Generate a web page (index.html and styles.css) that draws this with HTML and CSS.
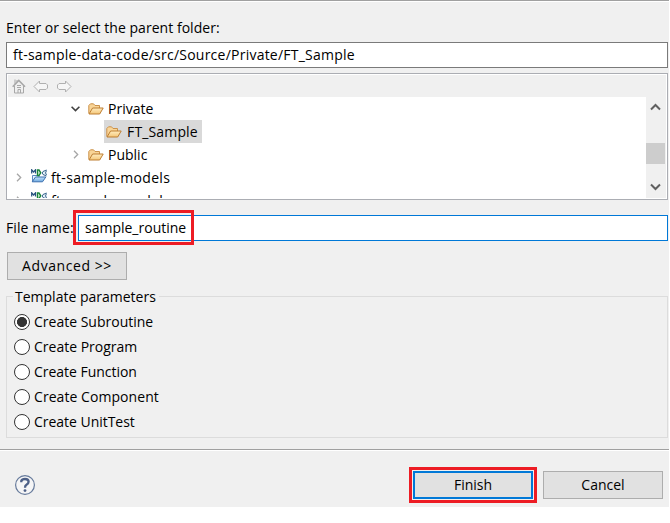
FILE: index.html
```html
<!DOCTYPE html>
<html lang="en">
<head>
<meta charset="utf-8">
<title>New File</title>
<link rel="stylesheet" href="styles.css">
</head>
<body>
<svg class="defs" width="0" height="0" aria-hidden="true">
  <defs>
    <linearGradient id="fold" x1="0" y1="0" x2="0" y2="1"><stop offset="0" stop-color="#ffedc0"/><stop offset="1" stop-color="#f4c678"/></linearGradient>
    <linearGradient id="blue" x1="0" y1="0" x2="0" y2="1"><stop offset="0" stop-color="#c4e4fb"/><stop offset="1" stop-color="#6fa9e0"/></linearGradient>
    <symbol id="folder" viewBox="0 0 16 12"><path d="M.8 10.5V2.5L2.5 .8H5.5L7 2.5H11.5V5" fill="#f9d597" stroke="#cb924a"/><path d="M1 11L4.6 5H15.2L11.7 11Z" fill="url(#fold)" stroke="#bd7e33" stroke-linejoin="round"/></symbol>
    <symbol id="project" viewBox="0 0 16 14"><path d="M1.5 12.5V6.5H8V8" fill="#e4f1fb" stroke="#5c88bf"/><path d="M1.2 12.8L4.5 8H14.8L11.5 12.8Z" fill="url(#blue)" stroke="#3c6fae"/><path d="M.7 4.5V.8L2.6 3L4.5 .8V4.5" fill="none" stroke="#244f7d" stroke-width="1.2"/><path d="M6.5 1H8L9.7 3.8L8 6.5H6.5Z" fill="#d9f2dc" stroke="#188338" stroke-width="1.4"/><path d="M15.5 1L12 2.5Q10.3 4 12 5.5L15.5 7M15.5 1.5Q13.5 4 15.5 6" fill="#e4eff8" stroke="#37648c"/></symbol>
    <symbol id="right" viewBox="0 0 6 9"><path d="M1 .8L4.7 4.5L1 8.2" fill="none" stroke="#a6a6a6" stroke-width="1.3"/></symbol>
    <symbol id="down" viewBox="0 0 9 6"><path d="M.6 .8L4.5 4.6L8.4 .8" fill="none" stroke="#404040" stroke-width="1.6"/></symbol>
  </defs>
</svg>
<main class="dialog">
  <section class="content">
    <div class="prompt"><span class="t-prompt">Enter or select the parent folder:</span></div>
    <div class="field parent"><span class="t-path">ft-sample-data-code/src/Source/Private/FT_Sample</span></div>
    <div class="browser">
      <div class="toolbar">
        <svg width="14" height="16" viewBox="0 0 14 16" fill="none" stroke="#a8a8a8"><path d="M.7 8.8L6.8 2.5L13 8.8" stroke-width="1.6"/><path d="M2.5 8V15H11.5V8M3 6V1.5M5 4V2M6 15V11.5H8.5V15M5 7.5H9M5 9.5H9"/></svg>
        <svg width="16" height="13" viewBox="0 0 16 13"><path d="M1 6.5L6.5 1V3.5H13L14.5 5V8L13 9.5H6.5V12Z" fill="#f6f6f6" stroke="#b0b0b0"/></svg>
        <svg width="16" height="13" viewBox="0 0 16 13"><path d="M15 6.5L9.5 1V3.5H3L1.5 5V8L3 9.5H9.5V12Z" fill="#f6f6f6" stroke="#b0b0b0"/></svg>
      </div>
      <div class="tree-area">
        <div class="tree">
          <div class="row deep"><svg class="twist" width="9" height="6"><use href="#down"/></svg><svg width="16" height="12"><use href="#folder"/></svg><span class="t-private">Private</span></div>
          <div class="row child"><div class="selected"><svg width="16" height="12"><use href="#folder"/></svg><span class="t-ft">FT_Sample</span></div></div>
          <div class="row deep"><svg class="twist" width="6" height="9"><use href="#right"/></svg><svg width="16" height="12"><use href="#folder"/></svg><span class="t-public">Public</span></div>
          <div class="row root"><svg class="twist" width="6" height="9"><use href="#right"/></svg><svg class="proj" width="16" height="14"><use href="#project"/></svg><span class="t-models">ft-sample-models</span></div>
          <div class="row root"><svg class="twist" width="6" height="9"><use href="#right"/></svg><svg class="proj" width="16" height="14"><use href="#project"/></svg><span class="t-models">ft-sample-models</span></div>
        </div>
        <div class="scrollbar">
          <svg width="11" height="8" viewBox="0 0 11 8"><path d="M1 6.5L5.5 2L10 6.5" fill="none" stroke="#606060" stroke-width="2"/></svg>
          <div class="thumb"></div>
          <svg width="11" height="8" viewBox="0 0 11 8"><path d="M1 1.5L5.5 6L10 1.5" fill="none" stroke="#606060" stroke-width="2"/></svg>
        </div>
      </div>
    </div>
    <div class="filename">
      <span class="file-label"><span class="t-file">File name:</span></span>
      <div class="field active"><span class="t-routine">sample_routine</span><i class="mark mark-name"></i></div>
    </div>
    <button class="button advanced"><span class="t-adv">Advanced &gt;&gt;</span></button>
    <section class="group">
      <h2 class="legend"><span class="t-legend">Template parameters</span></h2>
      <label class="option"><i class="radio checked"></i><span class="t-sub">Create Subroutine</span></label>
      <label class="option"><i class="radio"></i><span class="t-prog">Create Program</span></label>
      <label class="option"><i class="radio"></i><span class="t-func">Create Function</span></label>
      <label class="option"><i class="radio"></i><span class="t-comp">Create Component</span></label>
      <label class="option"><i class="radio"></i><span class="t-unit">Create UnitTest</span></label>
    </section>
  </section>
  <footer class="footer">
    <svg class="help" width="20" height="20" viewBox="0 0 20 20"><circle cx="10" cy="10" r="9.4" fill="#f5f5f6" stroke="#667a9b" stroke-width="1.2"/><path d="M6.3 7.2V6Q7 4 10 4Q13.6 4 13.6 6.8Q13.6 8.5 11.5 9.7Q10 10.6 10 12.7" fill="none" stroke="#4d6087" stroke-width="2.3"/><circle cx="10" cy="15.6" r="1.4" fill="#4d6087"/></svg>
    <button class="button finish"><span class="t-finish">Finish</span><i class="mark mark-finish"></i></button>
    <button class="button"><span class="t-cancel">Cancel</span></button>
  </footer>
</main>
</body>
</html>
```
FILE: styles.css
```css
* { box-sizing: border-box; }
body { margin: 0; background: #fff; color: #000; font: 14px/20px "Open Sans", "Noto Sans", sans-serif; overflow: hidden; }
svg { display: block; flex: none; }
span { white-space: nowrap; }
.defs { position: absolute; }
.dialog { width: 669px; height: 507px; background: #f0f0f0; border-top: 1px solid #a0a0a0; }
.content { height: 448px; padding: 0 1px 0 6px; border-top: 1px solid #fff; }
.prompt { height: 40px; padding-top: 16px; }
.t-prompt { letter-spacing: .04px; }
.t-path { letter-spacing: .235px; }
.t-ft { letter-spacing: .15px; }
.t-models { letter-spacing: .32px; }
.t-adv { letter-spacing: .57px; }
.t-file { letter-spacing: .1px; }
.t-func, .t-unit { letter-spacing: -.03px; }
.t-comp { letter-spacing: .06px; }
.field { display: flex; align-items: center; height: 26px; background: #fff; border: 1px solid #7a7a7a; padding-left: 6px; }
.browser { height: 127px; margin-top: 5px; border: 1px solid #abadb3; background: #fff; padding: 1px; }
.toolbar { display: flex; align-items: center; gap: 7px; height: 22px; padding-left: 4px; background: #f0f0f0; }
.tree-area { display: flex; height: 101px; overflow: hidden; }
.tree { flex: 1; height: 101px; overflow: hidden; }
.row { display: flex; align-items: center; height: 23px; }
.row .twist { margin-right: 8px; }
.deep { padding-left: 63px; }
.deep .twist[width="6"] { margin-left: 2px; margin-right: 9px; }
.deep span { margin-left: 4px; }
.selected span { margin-left: 5px; }
.child { padding-left: 96px; }
.selected { display: flex; align-items: center; width: 98px; height: 23px; padding-left: 2px; background: #d9d9d9; }
.root { padding-left: 8px; }
.row.root .twist { margin-right: 9px; }
.proj { margin-bottom: 4px; }
.root span { margin-left: 4px; }
.scrollbar { display: flex; flex-direction: column; align-items: center; justify-content: space-between; width: 20px; padding: 6px 1px 7px 0; background: #f0f0f0; }
.thumb { width: 19px; height: 21px; margin-top: 13px; background: #cdcdcd; }
.filename { display: flex; align-items: center; height: 26px; margin-top: 15px; }
.file-label { width: 72px; }
.active { position: relative; flex: 1; border-color: #0078d7; }
.mark { position: absolute; border: 3px solid #ed1c24; pointer-events: none; }
.mark-name { left: -6px; top: -6px; width: 121px; height: 35px; }
.button { position: relative; display: flex; align-items: center; justify-content: center; width: 120px; height: 28px; padding: 0; border: 1px solid #adadad; background: #e1e1e1; color: #000; font: inherit; }
.advanced { margin: 11px 0 0 1px; }
.group { height: 142px; margin-top: 16px; padding-left: 7px; border: 1px solid #dcdcdc; }
.legend { width: 146px; height: 20px; margin: -10px 0 0 -1px; padding-left: 2px; background: #f0f0f0; font: inherit; }
.option { display: flex; align-items: center; height: 25px; }
.legend + .option { margin-top: 2px; }
.radio { width: 16px; height: 16px; margin-right: 4px; border: 1px solid #333; border-radius: 50%; background: #fff; }
.checked { background: radial-gradient(circle, #333 4.7px, #fff 5.3px); }
.footer { display: flex; align-items: center; height: 58px; padding: 12px 6px 0 15px; border-top: 1px solid #a0a0a0; box-shadow: inset 0 1px #fff; gap: 10px; }
.help { margin-right: auto; }
.finish { border: 2px solid #0078d7; }
.mark-finish { inset: -6px; }
```
